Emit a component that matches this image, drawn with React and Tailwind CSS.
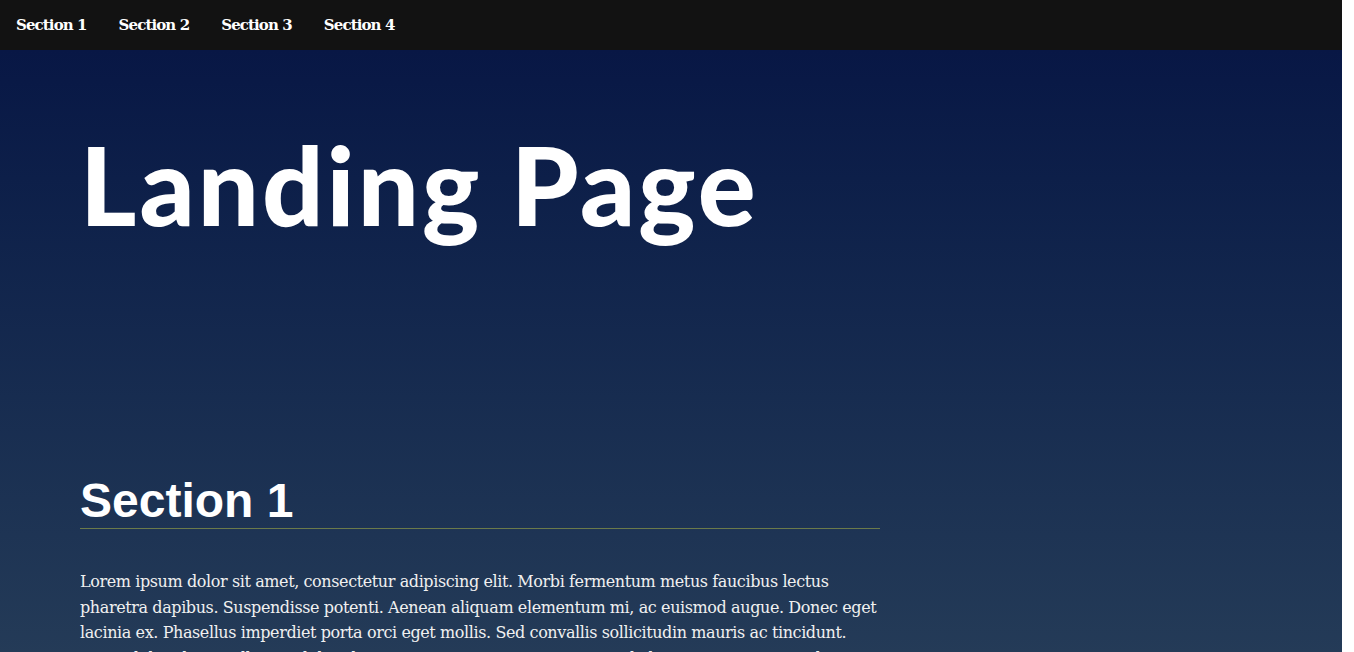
export default function App() {
  const serif = { fontFamily: '"DejaVu Serif", "Liberation Serif", serif' };
  return (
    <div className="w-full h-[652px] overflow-hidden flex bg-white">
      <div className="w-[1342px] h-full flex flex-col">
        <nav className="h-[50px] bg-[#121212] flex items-center shrink-0">
          {['Section 1', 'Section 2', 'Section 3', 'Section 4'].map((s) => (
            <a key={s} className="px-4 text-white font-bold text-[15px] tracking-[-0.9px]" style={serif}>
              {s}
            </a>
          ))}
        </nav>
        <main className="flex-1 bg-gradient-to-b from-[#081745] to-[#253c58] px-20">
          <h1
            className="text-white font-black text-[108px] leading-none mt-[80px] tracking-[3px] font-[Lato,sans-serif]"
          >
            Landing Page
          </h1>
          <section className="w-[800px] mt-[239px]">
            <h2 className="text-white font-bold text-[48px] leading-none pb-[3px] border-b border-[#6b7a4a] font-['Liberation_Sans',Arial,sans-serif]">
              Section 1
            </h2>
            <p className="text-[#f0f0f0] text-[16px] leading-[25.6px] mt-[40px] tracking-[-0.4px]" style={serif}>
              Lorem ipsum dolor sit amet, consectetur adipiscing elit. Morbi fermentum metus faucibus lectus pharetra dapibus. Suspendisse potenti. Aenean aliquam elementum mi, ac euismod augue. Donec eget lacinia ex. Phasellus imperdiet porta orci eget mollis. Sed convallis sollicitudin mauris ac tincidunt. Donec bibendum, nulla eget bibendum auctor, ipsum mi porta risus, vel aliquam sem urna nec lorem.
            </p>
          </section>
        </main>
      </div>
    </div>
  );
}
